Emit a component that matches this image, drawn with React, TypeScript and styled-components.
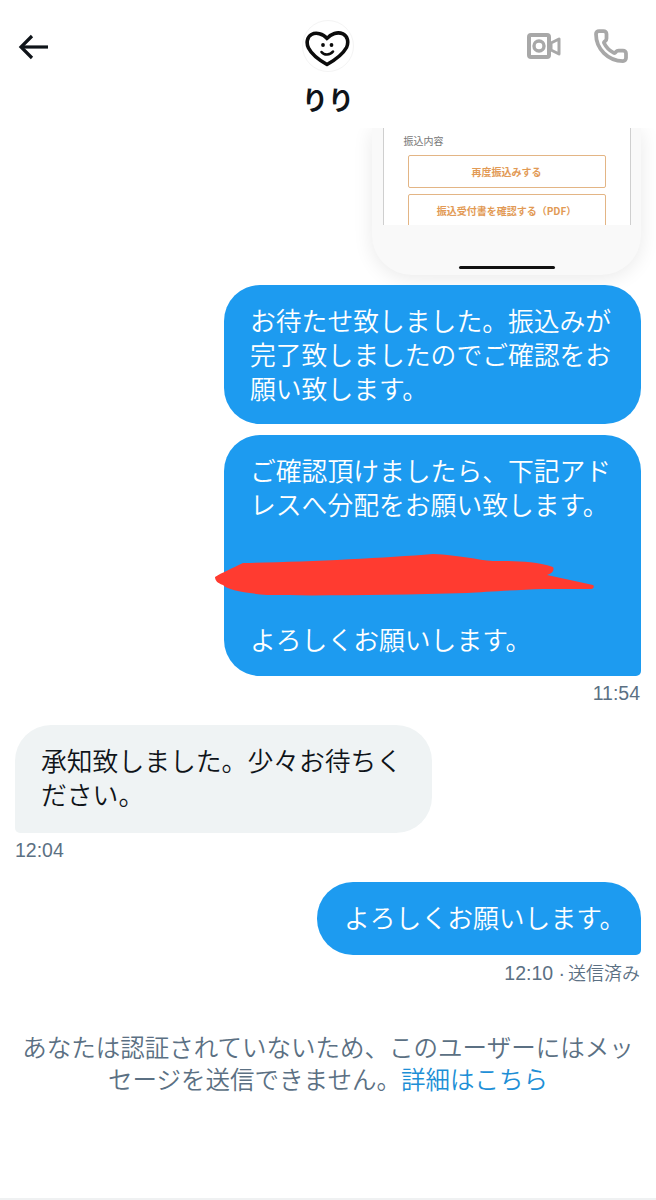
import styled, { createGlobalStyle } from "styled-components";
import { Phone } from "lucide-react";

const GlobalStyle = createGlobalStyle`
  html, body {
    margin: 0;
    padding: 0;
    background: #fff;
  }
  body {
    font-family: "Noto Sans CJK JP", "Noto Sans", sans-serif;
  }
`;

const Page = styled.div`
  width: 656px;
  height: 1200px;
  overflow: hidden;
  display: flex;
  flex-direction: column;
  box-sizing: border-box;
  border-bottom: 2px solid #eff1f2;
`;

const Header = styled.header`
  position: relative;
  z-index: 2;
  height: 128px;
  flex: none;
  background: #fff;
  display: grid;
  grid-template-columns: 1fr auto 1fr;
  box-sizing: border-box;
`;

const BackButton = styled.div`
  padding: 32px 0 0 17px;
  color: #0f1419;
  line-height: 0;
`;

const Profile = styled.div`
  padding-top: 20px;
  display: flex;
  flex-direction: column;
  align-items: center;
`;

const Avatar = styled.div`
  width: 52px;
  height: 52px;
  box-sizing: border-box;
  border: 1px solid #f4f4f4;
  border-radius: 50%;
  padding-top: 6px;
  display: flex;
  align-items: center;
  justify-content: center;
`;

const Name = styled.div`
  margin-top: 8px;
  font-size: 26px;
  line-height: 38px;
  font-weight: 700;
  color: #0f1419;
`;

const Actions = styled.div`
  display: flex;
  justify-content: flex-end;
  align-items: flex-start;
  gap: 30px;
  padding: 28px 27px 0 0;
  color: #a8a8a8;
`;

const VideoSlot = styled.div`
  margin-top: 4px;
  line-height: 0;
`;

const Thread = styled.main`
  padding: 0 15px;
  display: flex;
  flex-direction: column;
  flex: 1;
`;

const Attachment = styled.div`
  align-self: flex-end;
  width: 269px;
  height: 147px;
  flex: none;
  box-sizing: border-box;
  background: #f9f9f9;
  border-radius: 0 0 40px 40px;
  box-shadow: 0 3px 20px rgba(0, 0, 0, 0.09);
  display: flex;
  flex-direction: column;
  align-items: center;
`;

const ShotBody = styled.div`
  width: 248px;
  height: 97px;
  flex: none;
  box-sizing: border-box;
  background: #fff;
  border-left: 1px solid #cfcfcf;
  border-right: 1px solid #cfcfcf;
  padding: 7px 24px 0 20px;
  overflow: hidden;
`;

const ShotLabel = styled.div`
  font-size: 10px;
  line-height: 12px;
  color: #777;
  margin-bottom: 8px;
`;

const ShotButton = styled.div`
  width: 198px;
  height: 33px;
  margin: 0 0 6px 4px;
  box-sizing: border-box;
  border: 1.5px solid #e3b585;
  border-radius: 2px;
  display: flex;
  align-items: center;
  justify-content: center;
  color: #e29a55;
  font-size: 10px;
  font-weight: 700;
`;

const HomeBar = styled.div`
  width: 96px;
  height: 3px;
  margin-top: 41px;
  background: #111;
  border-radius: 2px;
`;

const Bubble = styled.div<{ $mine?: boolean; $tail?: boolean; $gap?: number }>`
  position: relative;
  flex: none;
  box-sizing: border-box;
  width: 417px;
  margin-top: ${(p) => p.$gap ?? 0}px;
  padding: 18px 27px 20px 26px;
  align-self: ${(p) => (p.$mine ? "flex-end" : "flex-start")};
  background: ${(p) => (p.$mine ? "#1d9bf0" : "#eff3f4")};
  color: ${(p) => (p.$mine ? "#fff" : "#0f1419")};
  font-size: 25.8px;
  font-weight: 350;
  line-height: 33.8px;
  border-radius: 36px;
  ${(p) => p.$tail && (p.$mine ? "border-bottom-right-radius: 5px;" : "border-bottom-left-radius: 5px;")}
`;

const ReceivedBubble = styled(Bubble)`
  padding-bottom: 22px;
`;

const ShortBubble = styled(Bubble)`
  width: 324px;
  padding: 18px 10px 21px 27px;
`;

const Scribble = styled.svg`
  position: absolute;
  top: 119px;
  left: -9px;
`;

const Stamp = styled.div<{ $mine?: boolean }>`
  margin-top: 6px;
  height: 24px;
  line-height: 22px;
  padding-right: ${(p) => (p.$mine ? 1 : 0)}px;
  font-family: "Liberation Sans", "Noto Sans CJK JP", sans-serif;
  font-size: 19.5px;
  color: #5b7083;
  align-self: ${(p) => (p.$mine ? "flex-end" : "flex-start")};
`;

const SentMark = styled.span`
  margin-left: 3px;
  font-family: "Noto Sans CJK JP", sans-serif;
  font-size: 18px;
  font-weight: 350;
`;

const Notice = styled.p`
  margin: 46px 0 0;
  text-align: center;
  font-size: 24.5px;
  font-weight: 350;
  line-height: 32px;
  line-break: anywhere;
  color: #5b7083;
`;

const NoticeLink = styled.span`
  color: #1d8fd6;
`;

const HeartLogo = () => (
  <svg width="45" height="36" viewBox="0 0 45 36" fill="none" stroke="#0b0b0b" strokeLinecap="round" strokeLinejoin="round">
    <path
      d="M22 7.5C18 2.5 11 1 6.5 3.5C2 6 1 12 3.5 17C6.5 23 14 29 22 33.5C30 29 38 23 41.5 16.5C44 11 42.5 5 38 2.8C32.5 0.5 26 2.5 22 7.5Z"
      strokeWidth="3.6"
    />
    <circle cx="18" cy="14" r="1.9" fill="#0b0b0b" stroke="none" />
    <circle cx="26.5" cy="14" r="1.9" fill="#0b0b0b" stroke="none" />
    <path d="M16.5 21C19 24.5 25 24.5 28 20.5" strokeWidth="2.6" />
  </svg>
);

const ArrowLeft = () => (
  <svg width="34" height="30" viewBox="0 0 34 30" fill="none" stroke="currentColor" strokeWidth="3.2" strokeLinejoin="miter">
    <path d="M31 15H4" />
    <path d="M15 4L4 15L15 26" />
  </svg>
);

const VideoIcon = () => (
  <svg width="36" height="30" viewBox="0 0 36 30" fill="none" stroke="currentColor" strokeWidth="4" strokeLinejoin="round">
    <rect x="2" y="3" width="20" height="22" rx="2" />
    <circle cx="12" cy="14" r="5" strokeWidth="3.4" />
    <path d="M24 11L32 7V22L24 18Z" strokeWidth="3" />
  </svg>
);

const App = () => {
  return (
    <Page>
      <GlobalStyle />
      <Header>
        <BackButton>
          <ArrowLeft />
        </BackButton>
        <Profile>
          <Avatar>
            <HeartLogo />
          </Avatar>
          <Name>りり</Name>
        </Profile>
        <Actions>
          <VideoSlot>
            <VideoIcon />
          </VideoSlot>
          <Phone size={36} strokeWidth={2.5} />
        </Actions>
      </Header>
      <Thread>
        <Attachment>
          <ShotBody>
            <ShotLabel>振込内容</ShotLabel>
            <ShotButton>再度振込みする</ShotButton>
            <ShotButton>振込受付書を確認する（PDF）</ShotButton>
          </ShotBody>
          <HomeBar />
        </Attachment>

        <Bubble $mine $gap={10}>
          お待たせ致しました。振込みが完了致しましたのでご確認をお願い致します。
        </Bubble>
        <Bubble $mine $tail $gap={11}>
          ご確認頂けましたら、下記アドレスへ分配をお願い致します。
          <br />
          <br />
          <br />
          <br />
          よろしくお願いします。
          <Scribble width="380" height="42" viewBox="0 0 380 42">
            <path
              d="M0 23C6 19 18 14 28 9C90 8 170 4 218 0C245 1 262 6 278 7C300 7 318 7 338 13C340 17 336 20 332 21L378 31C380 33 378 35 375 35L328 35C300 36 270 38 252 39C180 41 100 42 52 41C30 39 12 36 8 31C2 29 0 26 0 23Z"
              fill="#ff3b30"
            />
          </Scribble>
        </Bubble>
        <Stamp $mine>11:54</Stamp>

        <ReceivedBubble $tail $gap={19}>
          承知致しました。少々お待ちください。
        </ReceivedBubble>
        <Stamp>12:04</Stamp>

        <ShortBubble $mine $tail $gap={19}>
          よろしくお願いします。
        </ShortBubble>
        <Stamp $mine>
          12:10 ·<SentMark>送信済み</SentMark>
        </Stamp>

        <Notice>
          あなたは認証されていないため、このユーザーにはメッセージを送信できません。
          <NoticeLink>詳細はこちら</NoticeLink>
        </Notice>
      </Thread>
    </Page>
  );
};

export default App;
